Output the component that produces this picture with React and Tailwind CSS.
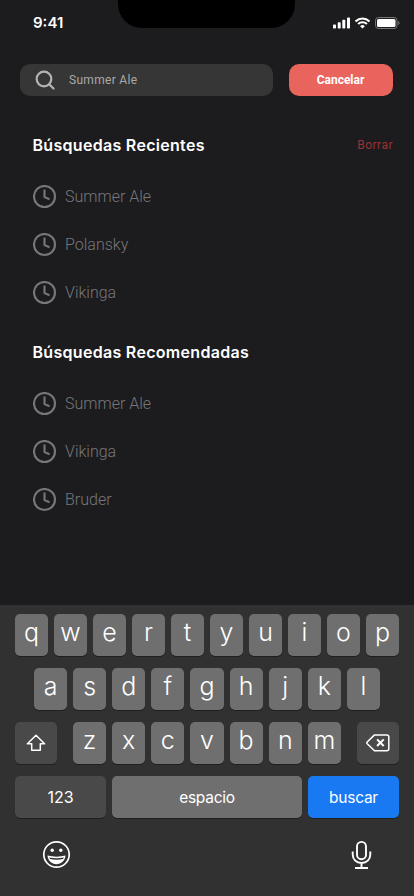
import React, { useState } from "react";

const recentSearches = ["Summer Ale", "Polansky", "Vikinga"];
const recommendedSearches = ["Summer Ale", "Vikinga", "Bruder"];

const firstRow = ["q", "w", "e", "r", "t", "y", "u", "i", "o", "p"];
const secondRow = ["a", "s", "d", "f", "g", "h", "j", "k", "l"];
const thirdRow = ["z", "x", "c", "v", "b", "n", "m"];

function ClockIcon() {
  return (
    <svg width="24" height="24" viewBox="0 0 24 24" fill="none" stroke="#77777a" strokeWidth="2.1">
      <circle cx="11.5" cy="11.5" r="10.5" />
      <path d="M11.500 4.500v7.600l5 2.200" strokeLinejoin="round" />
    </svg>
  );
}

function StatusBar() {
  return (
    <div className="relative flex h-11 shrink-0 items-start justify-between pl-[33px] pr-[14px] pt-[14px]">
      <span className="font-['Inter'] text-[15px] font-semibold leading-[18px] text-white">9:41</span>

      {/* Notch */}
      <div className="absolute left-[118px] top-0 h-7 w-[177px] rounded-b-[24px] bg-black" />

      <div className="flex items-center gap-[5px] pt-[3px]">
        <svg width="17" height="12" viewBox="0 0 17 12" fill="#fff">
          <rect x="0" y="7.5" width="3" height="4" rx="0.8" />
          <rect x="4.7" y="5.2" width="3" height="6.3" rx="0.8" />
          <rect x="9.3" y="2.8" width="3" height="8.7" rx="0.8" />
          <rect x="14" y="0.5" width="3" height="11" rx="0.8" />
        </svg>
        <svg width="15" height="12" viewBox="0.5 0 15 12" fill="none" stroke="#fff" strokeWidth="2.1">
          <path d="M1 4.400a10 10 0 0 1 14 0" />
          <path d="M3.600 7.100a6.300 6.300 0 0 1 8.800 0" />
          <path d="M8 11.600 5.600 9.200a3.400 3.400 0 0 1 4.800 0z" fill="#fff" stroke="none" />
        </svg>
        <svg width="25" height="12" viewBox="0 0 25 12" fill="none">
          <rect x="0.5" y="0.5" width="21.5" height="11" rx="3" stroke="#77777a" />
          <rect x="2" y="2" width="18.5" height="8" rx="1.6" fill="#fff" />
          <path d="M23.2 4v4c.8-.3 1.3-1.1 1.3-2s-.5-1.700-1.300-2z" fill="#77777a" />
        </svg>
      </div>
    </div>
  );
}

function SearchList({ title, items, onClear }) {
  return (
    <section>
      <div className="flex h-6 items-center justify-between">
        <h2 className="pb-0.5 font-['Inter',sans-serif] text-[16px] font-semibold tracking-[0.3px] text-white">{title}</h2>
        {onClear && (
          <button type="button" onClick={onClear} className="pb-0.5 text-xs tracking-[0.5px] text-[#963338]">
            Borrar
          </button>
        )}
      </div>
      <ul className="mt-[15px]">
        {items.map((item, idx) => (
          <li key={idx} className="flex h-12 items-center gap-[8.5px]">
            <ClockIcon />
            <span className="text-[16px] font-light text-[#77777a]">{item}</span>
          </li>
        ))}
      </ul>
    </section>
  );
}

function Key({ letter, onPress }) {
  return (
    <button
      type="button"
      onClick={() => onPress(letter)}
      className="flex h-[42px] flex-1 items-center justify-center rounded-[5px] bg-[#6f6f6f] pb-1.5 text-[25px] font-light leading-none text-white shadow-[0_1px_0_#1f1f1f]"
    >
      {letter}
    </button>
  );
}

function Keyboard({ onPress, onDelete }) {
  return (
    <div className="flex h-[291px] shrink-0 flex-col gap-3 bg-[#313131] px-[15px] pt-[9px] font-['Inter',sans-serif]">
      <div className="flex gap-1.5">
        {firstRow.map((l) => (
          <Key key={l} letter={l} onPress={onPress} />
        ))}
      </div>
      <div className="flex w-[346px] gap-1.5 self-center">
        {secondRow.map((l) => (
          <Key key={l} letter={l} onPress={onPress} />
        ))}
      </div>
      <div className="flex justify-between">
        <button type="button" className="flex h-[42px] w-[42px] items-center justify-center rounded-[5px] bg-[#494949] shadow-[0_1px_0_#1f1f1f]">
          <svg width="20" height="18" viewBox="0 0 20 18" fill="none" stroke="#fff" strokeWidth="1.5" strokeLinejoin="round">
            <path d="M10 1.200 1.400 9.800h4.300v6.400h8.600V9.800h4.300z" />
          </svg>
        </button>
        <div className="flex w-[268px] gap-1.5">
          {thirdRow.map((l) => (
            <Key key={l} letter={l} onPress={onPress} />
          ))}
        </div>
        <button
          type="button"
          onClick={onDelete}
          className="flex h-[42px] w-[42px] items-center justify-center rounded-[5px] bg-[#494949] shadow-[0_1px_0_#1f1f1f]"
        >
          <svg width="24" height="18" viewBox="0 0 24 18" fill="none" stroke="#fff" strokeWidth="1.5" strokeLinejoin="round">
            <path d="M8.500.900h12.300a2 2 0 0 1 2 2v11.800a2 2 0 0 1-2 2H8.500L1.200 9.700a1.300 1.300 0 0 1 0-1.700z" />
            <path d="m11.100 5.400 6.600 6.600M17.700 5.400l-6.600 6.600" strokeWidth="2" />
          </svg>
        </button>
      </div>
      <div className="flex gap-1.5 text-white">
        <button type="button" className="h-[42px] w-[91px] rounded-[5px] bg-[#494949] text-[16px] shadow-[0_1px_0_#1f1f1f]">
          123
        </button>
        <button type="button" onClick={() => onPress(" ")} className="h-[42px] w-[190px] rounded-[5px] bg-[#6f6f6f] pt-0.5 text-[15.5px] tracking-[-0.25px] shadow-[0_1px_0_#1f1f1f]">
          espacio
        </button>
        <button type="button" className="h-[42px] w-[91px] rounded-[5px] bg-[#1879f3] pt-0.5 text-[15.5px] tracking-[-0.25px] shadow-[0_1px_0_#1f1f1f]">
          buscar
        </button>
      </div>
      <div className="flex justify-between pl-[27px] pr-[27px] pt-[10px]">
        {/* Emoji */}
        <svg width="29" height="29" viewBox="0 0 29 29" fill="none" stroke="#fff">
          <circle cx="14.500" cy="14.500" r="12.700" strokeWidth="1.700" />
          <circle cx="10.200" cy="10.200" r="1.700" fill="#fff" stroke="none" />
          <circle cx="18.800" cy="10.200" r="1.700" fill="#fff" stroke="none" />
          <path d="M5.500 15.600c5.500 1.500 12.500 1.500 18 0-.4 5.300-4.300 8.600-9 8.600s-8.600-3.300-9-8.600z" fill="#fff" stroke="none" />
          <path d="M7.200 17.500c4.700.9 9.900.9 14.600 0-.2.7-.4 1.100-.8 1.600-3.900.8-9.100.8-13 0-.4-.5-.6-.9-.8-1.600z" fill="#313131" stroke="none" />
        </svg>
        {/* Microphone */}
        <svg width="21" height="29" viewBox="0 0 21 29" fill="none" stroke="#fff" strokeWidth="1.900">
          <rect x="6" y="1.900" width="9" height="17.300" rx="4.500" />
          <path d="M1.700 11.600v3c0 5 3.700 8.400 8.800 8.400s8.800-3.400 8.800-8.400v-3M10.500 23v4.500M4 28h13" />
        </svg>
      </div>
    </div>
  );
}

function App() {
  const [query, setQuery] = useState("Summer Ale");
  const [recent, setRecent] = useState(recentSearches);

  return (
    <div className="flex h-[896px] w-[414px] flex-col overflow-hidden bg-[#1c1c1e] font-['Roboto',sans-serif]">
      <StatusBar />

      {/* Search */}
      <div className="mt-5 flex h-8 shrink-0 gap-[15.5px] pl-5">
        <div className="flex w-[253px] items-center rounded-[10px] bg-[#363636] pl-[15px]">
          <svg width="20" height="20" viewBox="0 0 20 20" fill="none" stroke="#b4b4b4" strokeWidth="2.2">
            <circle cx="9" cy="9" r="7.300" />
            <path d="m14.200 14.200 4.300 4.300" strokeLinecap="round" />
          </svg>
          <input
            type="text"
            value={query}
            onChange={(e) => setQuery(e.target.value)}
            className="ml-[14px] w-[180px] bg-transparent text-xs tracking-[0.3px] text-[#a9a9a9] outline-none"
          />
        </div>
        <button type="button" onClick={() => setQuery("")} className="w-[104px] rounded-[10px] bg-[#e9645c] text-xs font-bold text-white">
          Cancelar
        </button>
      </div>

      <main className="flex flex-1 flex-col gap-6 pl-[32.5px] pr-[21px] pt-[38px]">
        <SearchList title="Búsquedas Recientes" items={recent} onClear={() => setRecent([])} />
        <SearchList title="Búsquedas Recomendadas" items={recommendedSearches} />
      </main>

      <Keyboard onPress={(l) => setQuery(query + l)} onDelete={() => setQuery(query.slice(0, -1))} />
    </div>
  );
}

export default App;
